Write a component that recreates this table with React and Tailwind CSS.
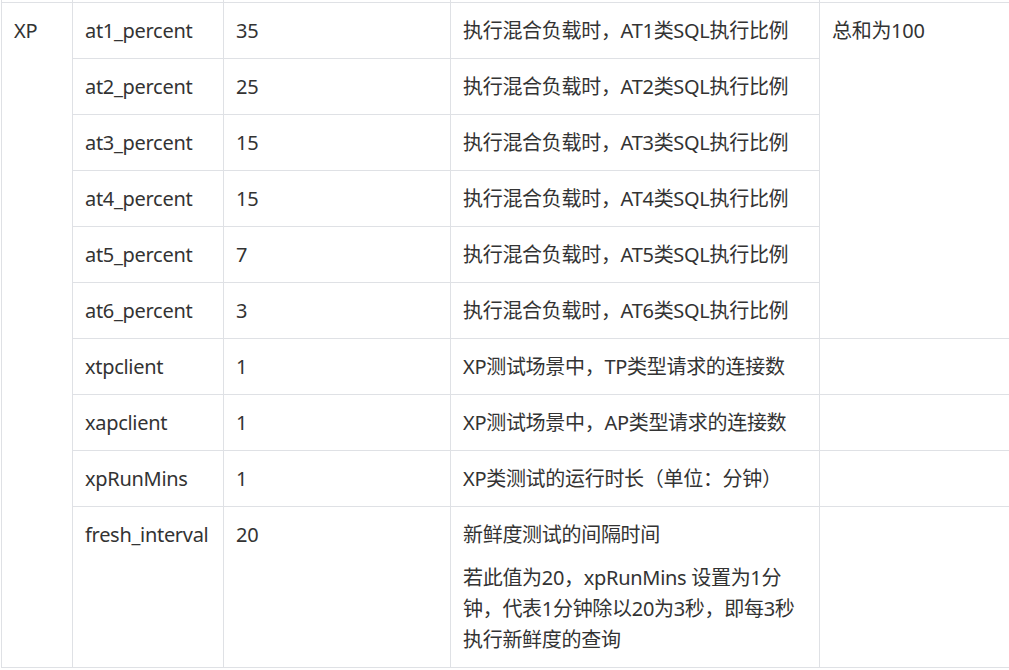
import React from "react";

const rows = [
  ["at1_percent", "35", "执行混合负载时，AT1类SQL执行比例"],
  ["at2_percent", "25", "执行混合负载时，AT2类SQL执行比例"],
  ["at3_percent", "15", "执行混合负载时，AT3类SQL执行比例"],
  ["at4_percent", "15", "执行混合负载时，AT4类SQL执行比例"],
  ["at5_percent", "7", "执行混合负载时，AT5类SQL执行比例"],
  ["at6_percent", "3", "执行混合负载时，AT6类SQL执行比例"],
  ["xtpclient", "1", "XP测试场景中，TP类型请求的连接数"],
  ["xapclient", "1", "XP测试场景中，AP类型请求的连接数"],
  ["xpRunMins", "1", "XP类测试的运行时长（单位：分钟）"],
];

const td = "border border-[#dfe1e5] px-3 py-3 align-top";

export default function App() {
  return (
    <div
      className="bg-white pl-px text-[20px] leading-[31px] tracking-[-0.3px] text-[#333333]"
      style={{ fontFamily: '"Noto Sans", "Noto Sans CJK SC", sans-serif' }}
    >
      <table className="w-[1008px] table-fixed border-collapse">
        <colgroup>
          <col className="w-[71px]" />
          <col className="w-[151px]" />
          <col className="w-[227px]" />
          <col className="w-[369px]" />
          <col className="w-[190px]" />
        </colgroup>
        <tbody>
          <tr className="h-[2px]">
            <td className="border border-t-0 border-[#dfe1e5] p-0"></td>
            <td className="border border-t-0 border-[#dfe1e5] p-0"></td>
            <td className="border border-t-0 border-[#dfe1e5] p-0"></td>
            <td className="border border-t-0 border-[#dfe1e5] p-0"></td>
            <td className="border border-t-0 border-[#dfe1e5] p-0"></td>
          </tr>
          {rows.map((r, i) => (
            <tr key={r[0]}>
              {i === 0 && (
                <td rowSpan={10} className={td}>
                  XP
                </td>
              )}
              <td className={td}>{r[0]}</td>
              <td className={td}>{r[1]}</td>
              <td className={td}>{r[2]}</td>
              {i === 0 && (
                <td rowSpan={6} className={td}>
                  总和为100
                </td>
              )}
              {i >= 6 && <td className={td}></td>}
            </tr>
          ))}
          <tr>
            <td className={td}>fresh_interval</td>
            <td className={td}>20</td>
            <td className={td}>
              <div className="flex flex-col gap-3">
                <p>新鲜度测试的间隔时间</p>
                <p>若此值为20，xpRunMins 设置为1分钟，代表1分钟除以20为3秒，即每3秒执行新鲜度的查询</p>
              </div>
            </td>
            <td className={td}></td>
          </tr>
        </tbody>
      </table>
    </div>
  );
}
